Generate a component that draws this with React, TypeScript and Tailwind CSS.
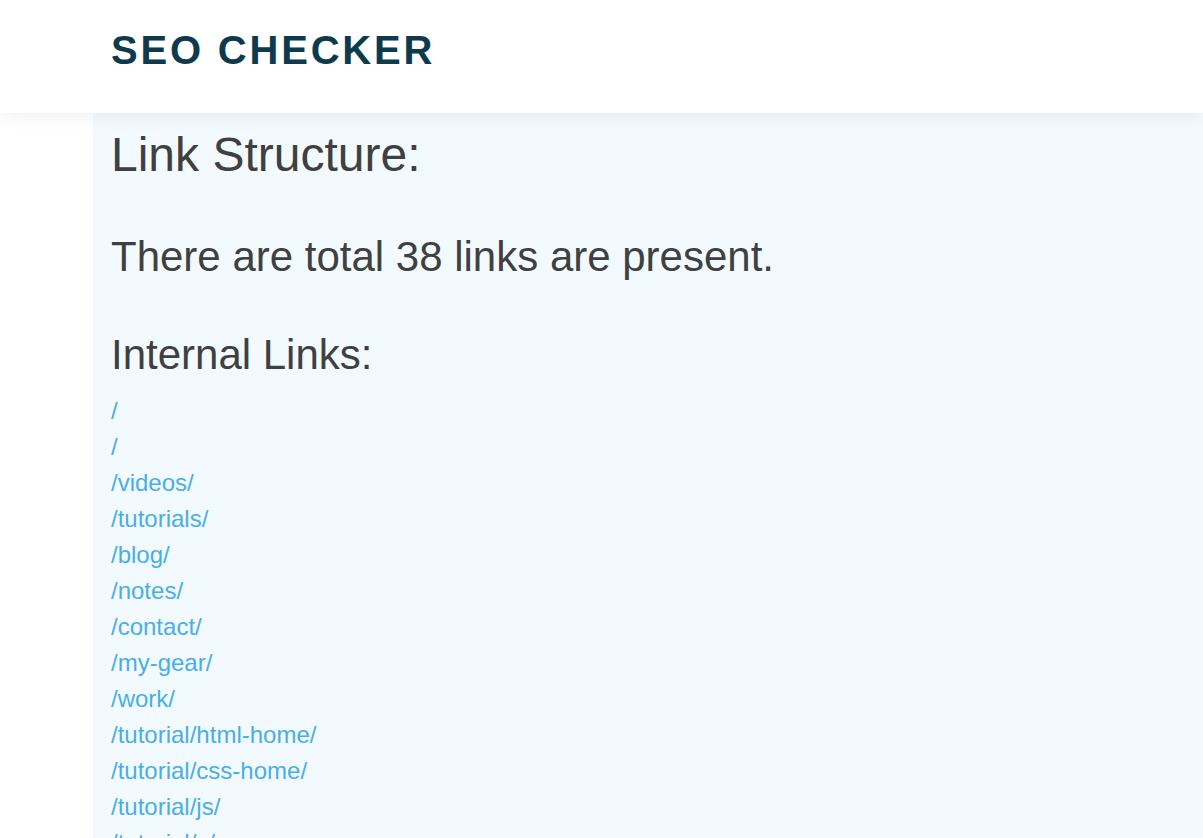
const links = [
  "/",
  "/",
  "/videos/",
  "/tutorials/",
  "/blog/",
  "/notes/",
  "/contact/",
  "/my-gear/",
  "/work/",
  "/tutorial/html-home/",
  "/tutorial/css-home/",
  "/tutorial/js/",
  "/tutorial/c/",
  "/tutorial/cpp/",
  "/tutorial/python/",
];

export default function App() {
  return (
    <div className="min-h-screen bg-white font-['Liberation_Sans',Arial,sans-serif]">
      <header className="relative z-10 h-[113px] bg-white shadow-[0_4px_18px_rgba(0,0,0,0.06)]">
        <div className="pl-[111px] pt-[27px]">
          <h1 className="text-[40px] leading-[46px] font-bold tracking-[2.8px] text-[#0e3a4e]">
            SEO CHECKER
          </h1>
        </div>
      </header>

      <main className="ml-[93px] h-[725px] overflow-hidden bg-[#f3faff] pl-[18px] pt-[14px] text-[#404040]">
        <h2 className="text-[48px] leading-[56px]">Link Structure:</h2>
        <p className="mt-[50px] text-[42px] leading-[48px]">
          There are total 38 links are present.
        </p>
        <h3 className="mt-[50px] text-[42px] leading-[48px]">Internal Links:</h3>
        <ul className="mt-[14px]">
          {links.map((href, i) => (
            <li key={i} className="text-[24px] leading-[36px]">
              <a href={href} className="text-[#4aaee6]">
                {href}
              </a>
            </li>
          ))}
        </ul>
      </main>
    </div>
  );
}
